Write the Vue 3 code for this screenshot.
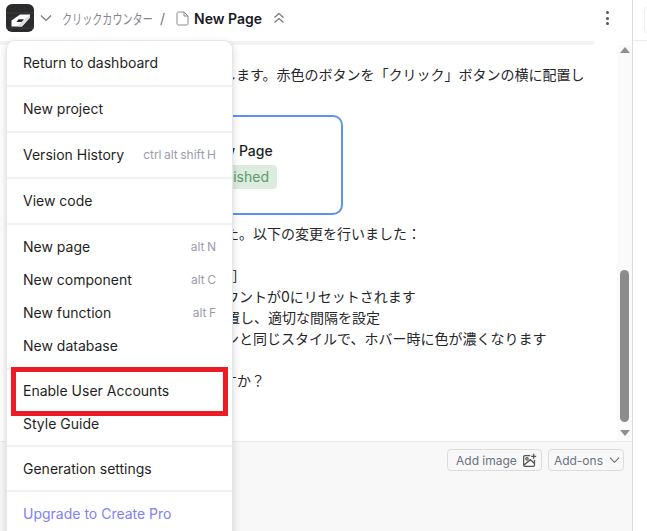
<script setup>
const sections = [
  [{ label: 'Return to dashboard' }],
  [{ label: 'New project' }],
  [{ label: 'Version History', keys: ['ctrl', 'alt', 'shift', 'H'] }],
  [{ label: 'View code' }],
  [
    { label: 'New page', keys: ['alt', 'N'] },
    { label: 'New component', keys: ['alt', 'C'] },
    { label: 'New function', keys: ['alt', 'F'] },
    { label: 'New database' }
  ],
  [{ label: 'Enable User Accounts', marked: true }, { label: 'Style Guide', short: true }],
  [{ label: 'Generation settings' }],
  [{ label: 'Upgrade to Create Pro', accent: true }]
]
const before = [
  { text: 'た。以下の変更を行いました：', x: 225 },
  { text: '', x: 0 },
  { text: '］', x: 232 },
  { text: 'ウントが0にリセットされます', x: 225 },
  { text: '置し、適切な間隔を設定', x: 226 },
  { text: 'ンと同じスタイルで、ホバー時に色が濃くなります', x: 225 },
  { text: '', x: 0 },
  { text: 'すか？', x: 223 }
]
</script>

<template>
  <div class="app">
    <div class="main">
      <header class="header">
        <div class="logo">
          <svg viewBox="0 0 28 28" width="28" height="28">
            <rect width="28" height="28" rx="6" fill="#2b2b2d" />
            <path d="M0 9H28M0 14H28M0 24H28" stroke="#3b3b3d" stroke-width="1" />
            <path d="M5.500 16.500 14 10.500H24V13.500L16 22.500H5.500z" fill="#fff" />
            <path d="M24 13.500 16 22.500H11.500L14.500 19 18.500 15.500 24 11z" fill="#dedede" />
            <path d="M12.500 15.200H18L15.500 18H10.500z" fill="#2b2b2d" />
          </svg>
        </div>
        <svg class="chev" viewBox="0 0 12 8" width="12" height="8"><path d="M1 1.500 6 6.500l5-5" fill="none" stroke="#777" stroke-width="1.200" /></svg>
        <span class="project">クリックカウンター</span>
        <span class="slash">/</span>
        <svg class="doc" viewBox="0 0 13 15" width="13" height="15"><path d="M1 2.500A1.500 1.500 0 0 1 2.500 1H8l4 4v7.500a1.500 1.500 0 0 1-1.500 1.500h-8A1.500 1.500 0 0 1 1 12.500zM8 1v4h4" fill="none" stroke="#8a8a8a" stroke-width="1" /></svg>
        <strong class="page">New Page</strong>
        <svg class="updown" viewBox="0 0 12 12" width="12" height="12"><path d="M1.500 5.500 6 1.500l4.500 4M1.500 10.500 6 6.500l4.500 4" fill="none" stroke="#777" stroke-width="1.300" /></svg>
        <div class="kebab"><i></i><i></i><i></i></div>
      </header>
      <div class="strip"></div>
      <div class="body">
        <div class="chat">
          <p class="line first">します。赤色のボタンを「クリック」ボタンの横に配置し</p>
          <p class="line blank"></p>
          <div class="card">
            <div class="card-title">New Page</div>
            <span class="pill">Published</span>
          </div>
          <p
            v-for="(line, i) in before"
            :key="i"
            class="line"
            :style="{ paddingLeft: line.x + 'px' }"
          >{{ line.text }}</p>
        </div>
        <div class="scrollbar">
          <span class="arrow up"></span>
          <div class="track"><div class="thumb"></div></div>
          <span class="arrow down"></span>
        </div>
      </div>
      <footer class="footer">
        <button class="btn">
          Add image
          <svg viewBox="0 0 18 18" width="15" height="15"><path d="M10 3H3.500A1.500 1.500 0 0 0 2 4.500v10A1.500 1.500 0 0 0 3.500 16h10a1.500 1.500 0 0 0 1.500-1.500V8M2.500 14.500 10 8l5 4.500M14 1v6M11 4h6" fill="none" stroke="#555" stroke-width="1.500" /><circle cx="6" cy="7" r="1.500" fill="none" stroke="#555" stroke-width="1.300" /></svg>
        </button>
        <button class="btn addons">
          Add-ons
          <svg viewBox="0 0 12 8" width="11" height="8"><path d="M1 1.500 6 6.500l5-5" fill="none" stroke="#666" stroke-width="1.200" /></svg>
        </button>
      </footer>
    </div>
    <div class="side"><div class="side-head"><span class="ghost"></span></div></div>

    <nav class="menu">
      <section v-for="(section, i) in sections" :key="i" class="menu-section">
        <div
          v-for="item in section"
          :key="item.label"
          class="menu-item"
          :class="{ accent: item.accent, marked: item.marked, short: item.short }"
        >
          <span>{{ item.label }}</span>
          <span v-if="item.keys" class="keys"><span v-for="k in item.keys" :key="k">{{ k }}</span></span>
        </div>
      </section>
    </nav>
  </div>
</template>

<style scoped>
.app {
  position: relative;
  display: flex;
  width: 647px;
  height: 531px;
  overflow: hidden;
  background: #fff;
  font-family: Inter, "Noto Sans CJK JP", sans-serif;
  font-size: 14px;
  color: #1f1f23;
}
.main {
  display: flex;
  flex-direction: column;
  width: 633px;
  flex: none;
  border-right: 1px solid #dcdcdc;
  box-sizing: border-box;
}
.header {
  display: flex;
  align-items: center;
  height: 41px;
  flex: none;
  padding: 0 0 5px 6px;
  box-sizing: border-box;
}
.logo { width: 28px; height: 28px; }
.chev { margin-left: 6px; }
.project {
  margin-left: 10px;
  width: 91px;
  font-size: 14px;
  transform: scaleX(0.72);
  transform-origin: left center;
  color: #85858d;
  white-space: nowrap;
}
.slash { margin-left: 7px; color: #777; font-size: 14px; }
.doc { margin-left: 11px; }
.page { margin-left: 5px; font-weight: 600; font-size: 14px; color: #1b1b1f; }
.updown { margin-left: 11px; }
.kebab {
  display: flex;
  flex-direction: column;
  gap: 2.5px;
  margin-left: auto;
  margin-right: 23px;
}
.kebab i { display: block; width: 3px; height: 3px; border-radius: 50%; background: #555; }
.strip {
  height: 4px;
  flex: none;
  margin-right: 37px;
  background: #f3f3f3;
  border-radius: 0 0 6px 0;
}
.body { display: flex; flex: 1; min-height: 0; }
.chat { flex: 1; padding-top: 19px; overflow: hidden; }
.line {
  margin: 0;
  height: 21px;
  line-height: 21px;
  white-space: pre;
  color: #26262a;
}
.first { padding-left: 222px; }
.card {
  box-sizing: border-box;
  width: 163px;
  height: 100px;
  margin: 9px 0 8px 180px;
  padding: 25px 0 0 14px;
  border: 2px solid #5b93f5;
  border-radius: 10px;
}
.card-title { font-weight: 500; line-height: 17px; margin-left: 9px; }
.pill {
  display: inline-block;
  margin-top: 6px;
  padding: 0 8px;
  height: 24px;
  line-height: 24px;
  border-radius: 4px;
  background: #dcecdf;
  color: #5b9a6c;
}
.scrollbar {
  display: flex;
  flex-direction: column;
  align-items: center;
  width: 15px;
  flex: none;
  background: #fafafa;
}
.arrow { width: 0; height: 0; border-left: 5px solid transparent; border-right: 5px solid transparent; flex: none; }
.arrow.up { margin-top: 2px; border-bottom: 6px solid #8f8f8f; }
.arrow.down { margin-bottom: 5px; border-top: 6px solid #8f8f8f; }
.track { flex: 1; display: flex; flex-direction: column; justify-content: flex-end; padding-bottom: 8px; }
.thumb { width: 9px; height: 152px; border-radius: 5px; background: #8c8c8c; }
.footer {
  display: flex;
  justify-content: flex-end;
  align-items: flex-start;
  gap: 6px;
  height: 90px;
  flex: none;
  padding: 7px 8px 0 0;
  box-sizing: border-box;
  background: #f8f8f8;
  border-top: 1px solid #ececec;
}
.btn {
  display: flex;
  align-items: center;
  gap: 5px;
  height: 22px;
  padding: 0 4px 0 8px;
  background: #f8f8f8;
  border: 1px solid #dcdcdc;
  border-radius: 4px;
  font: 12px Inter, sans-serif;
  color: #6b7280;
}
.btn.addons { padding: 0 3px 0 5px; gap: 6px; }
.side { flex: 1; }
.side-head { height: 41px; border-bottom: 1px solid #ececec; box-sizing: border-box; overflow: hidden; }
.ghost { display: block; width: 20px; height: 26px; margin: 6px 0 0 11px; border: 1px solid #efefef; border-radius: 6px; }
.menu {
  position: absolute;
  left: 7px;
  top: 41px;
  width: 225px;
  background: #fff;
  border-radius: 8px 8px 0 0;
  box-shadow: 0 0 0 1px #e6e6e6, 0 3px 10px rgba(0, 0, 0, 0.2);
}
.menu-section { padding: 5px 0 6px; border-bottom: 2px solid #f2f2f2; }
.menu-section:nth-child(6) { padding-top: 4px; }
.menu-section:nth-child(7) { padding-bottom: 5px; }
.menu-section:last-child { border-bottom: 0; padding-bottom: 20px; }
.menu-item {
  position: relative;
  display: flex;
  justify-content: space-between;
  align-items: center;
  height: 33px;
  padding: 0 16px;
}
.menu-item.short { height: 32px; }
.menu-item.accent { color: #8080f8; }
.menu-item.marked::after {
  content: "";
  position: absolute;
  left: 4px;
  top: -7px;
  width: 217px;
  height: 49px;
  box-sizing: border-box;
  border: 5px solid #ed1c24;
}
.keys { display: flex; gap: 2.5px; font-size: 12px; color: #9c9cb0; }
</style>
